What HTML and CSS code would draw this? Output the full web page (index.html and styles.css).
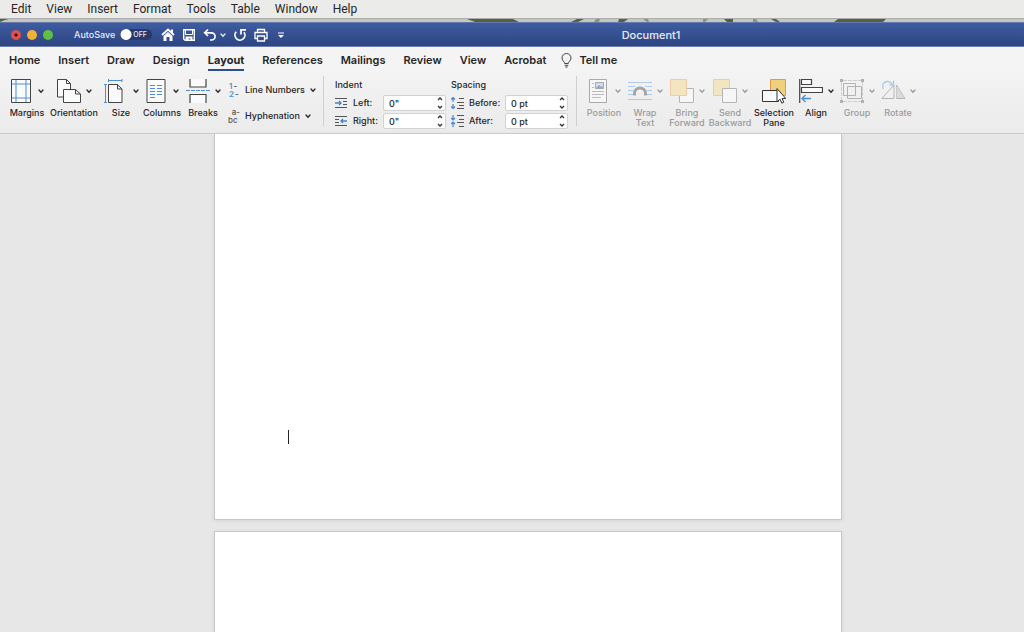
FILE: index.html
```html
<!DOCTYPE html>
<html lang="en">
<head>
<meta charset="utf-8">
<meta name="viewport" content="width=device-width, initial-scale=1">
<title>Document1</title>
<link rel="stylesheet" href="styles.css">
</head>
<body>
<svg class="defs" width="0" height="0" aria-hidden="true">
  <symbol id="chev" viewBox="0 0 6 6"><path d="M1 2l2 2.2L5 2" fill="none" stroke="currentColor" stroke-width="1.3" stroke-linecap="round"/></symbol>
  <symbol id="updown" viewBox="0 0 6 14"><path d="M1 4l2-2 2 2M1 10l2 2 2-2" fill="none" stroke="#333" stroke-width="1.3"/></symbol>
</svg>

<nav class="menubar" aria-label="Menu bar">
  <button>Edit</button><button>View</button><button>Insert</button><button>Format</button><button>Tools</button><button>Table</button><button>Window</button><button>Help</button>
</nav>
<svg class="wallpaper" height="4" viewBox="0 0 1024 3" preserveAspectRatio="none" aria-hidden="true">
  <path d="M0 0h9L5 1 0 3zM467 0h46l6 3h-44zM577 0h7l-6 3h-7zM619 0h9l-4 3h-6zM724 0h9v3h-6zM771 0h5l4 3h-4zM838 0h48l-3 3h-49z" fill="#536341"/>
  <path d="M596 0h4l-1 3h-5zM643 0h5l1 3h-2zM703 0h5l-3 3h-2zM753 0h3l2 3h-5z" fill="#7f9d6e"/>
</svg>

<header class="titlebar">
  <div class="lights">
    <button class="light close" aria-label="Close"></button>
    <button class="light minimize" aria-label="Minimize"></button>
    <button class="light zoom" aria-label="Zoom"></button>
  </div>
  <label class="autosave">AutoSave
    <span class="switch"><input type="checkbox" role="switch"><span class="off">OFF</span></span>
  </label>
  <div class="quick">
    <button aria-label="Home"><svg width="14" height="14" viewBox="0 0 14 14"><path d="M1 7l6-5.5L13 7" fill="none" stroke="#fff" stroke-width="1.7"/><path d="M10 1.5h2v4l-2-2zM2.5 8L7 4l4.500 4v5H8.500V9h-3v4h-3z" fill="#fff"/></svg></button>
    <button aria-label="Save"><svg width="14" height="14" viewBox="0 0 14 14"><path d="M2 1.700h10.300v10.600H3.200L1.700 11V1.700z" fill="none" stroke="#fff" stroke-width="1.400"/><path d="M3.500 1.500h7v5h-7z" fill="none" stroke="#fff"/><path d="M3.500 8.500h7V13H8.500v-2.500H6.500V13h-3z" fill="#fff"/></svg></button>
    <button class="undo" aria-label="Undo"><svg width="14" height="14" viewBox="0 0 14 14"><path d="M5 1.500L1.700 4.800 5 8M2 4.800h6.500a3.600 3.600 0 0 1 0 7.200H7" fill="none" stroke="#fff" stroke-width="1.700"/></svg></button>
    <button class="undo-more" aria-label="Undo history"><svg width="6" height="6"><use href="#chev"/></svg></button>
    <button aria-label="Repeat"><svg width="14" height="14" viewBox="0 0 14 14"><path d="M3.200 3.800A5 5 0 1 0 11 4.200M8 6.500V1.800h5" fill="none" stroke="#fff" stroke-width="1.700"/></svg></button>
    <button aria-label="Print"><svg width="14" height="14" viewBox="0 0 14 14"><path d="M3.500 4.500v-3h7v3M3.500 10.500H1v-6h12v6h-2.500M3.500 8h7v5h-7z" fill="none" stroke="#fff" stroke-width="1.300"/></svg></button>
    <button class="customize" aria-label="Customize toolbar"><svg width="6" height="8" viewBox="0 0 6 8"><path d="M0 2h6" stroke="#fff"/><path d="M0 4h6L3 7z" fill="#fff"/></svg></button>
  </div>
  <h1 class="title">Document1</h1>
</header>

<nav class="tabs" aria-label="Ribbon tabs">
  <button>Home</button><button>Insert</button><button>Draw</button><button>Design</button><button class="current" aria-current="page">Layout</button><button>References</button><button>Mailings</button><button>Review</button><button>View</button><button>Acrobat</button>
  <button class="tell"><svg width="11" height="15" viewBox="0 0 11 15" fill="none" stroke="#444"><path d="M3.700 10.500C3.700 8.500 1 8 1 5a4.500 4.500 0 0 1 9 0c0 3-2.700 3.500-2.700 5.500zM3.700 12.300h3.600M4.300 14h2.400"/></svg>Tell me</button>
</nav>

<section class="ribbon" aria-label="Layout">
  <div class="group setup">
    <button class="tool"><span class="art"><svg width="20" height="24" viewBox="0 0 20 24" fill="none"><path d="M.5.500h19v23H.5z" fill="#fafafa" stroke="#444"/><path d="M5 1v22M15 1v22M1 5h18M1 19h18" stroke="#4d8fd6"/></svg><svg class="chev" width="6" height="6"><use href="#chev"/></svg></span>Margins</button>
    <button class="tool wide"><span class="art"><svg width="24" height="24" viewBox="0 0 24 24" fill="#fafafa" stroke="#444"><path d="M.5.500h9l4 4v13.500h-13zM9.500.500v4h4"/><path d="M6.500 10.500h12l5 4.500v8.500h-17zM18.500 10.500V15h5"/></svg><svg class="chev near" width="6" height="6"><use href="#chev"/></svg></span>Orientation</button>
    <button class="tool"><span class="art"><svg width="22" height="24" viewBox="0 0 22 24" fill="none"><path d="M4.500 5.500h9l4.500 4.500v13.500H4.500zM13.500 5.500V10H18" fill="#fafafa" stroke="#444"/><path d="M4.500 1.500H18M4.500 0v3M18 0v3M1.500 5v18.500M0 5.500h3M0 23.500h3" stroke="#4d8fd6"/></svg><svg class="chev" width="6" height="6"><use href="#chev"/></svg></span>Size</button>
    <button class="tool mid"><span class="art"><svg width="20" height="24" viewBox="0 0 20 24" fill="none"><path d="M1 .500h18v23H1z" fill="#fafafa" stroke="#444"/><path d="M4 6.500h5M11 6.500h5M4 9.500h5M11 9.500h5M4 12.500h5M11 12.500h5M4 15.500h5M11 15.500h5M4 18.500h5" stroke="#4d8fd6"/></svg><svg class="chev" width="6" height="6"><use href="#chev"/></svg></span>Columns</button>
    <button class="tool"><span class="art"><svg width="24" height="24" viewBox="0 0 24 24" fill="none"><path d="M4 0v8h16V0M4 24v-8.500h16V24" fill="#fafafa" stroke="#444" stroke-width="1.200"/><path d="M0 11.500h24" stroke="#4d8fd6" stroke-dasharray="4 1"/></svg><svg class="chev near" width="6" height="6"><use href="#chev"/></svg></span>Breaks</button>
    <div class="stack">
      <button><span class="mark num"><span>1<i>-</i></span><span>2<i>-</i></span></span>Line Numbers<svg class="chev" width="6" height="6"><use href="#chev"/></svg></button>
      <button><span class="mark abc"><span>a-</span><span>bc</span></span>Hyphenation<svg class="chev" width="6" height="6"><use href="#chev"/></svg></button>
    </div>
  </div>

  <div class="group fields">
    <fieldset>
      <legend>Indent</legend>
      <div class="row"><svg width="13" height="12" viewBox="0 0 13 12" fill="none"><path d="M0 1.500h12M8 4.500h4M8 7.500h4M0 10.500h12" stroke="#555"/><path d="M0 6h6M4 4l2 2-2 2" stroke="#3f86d6" stroke-width="1.300"/></svg><label for="left">Left:</label><span class="spin"><input id="left" type="text" value='0"'><button aria-label="Change left indent"><svg width="6" height="14"><use href="#updown"/></svg></button></span></div>
      <div class="row"><svg width="13" height="12" viewBox="0 0 13 12" fill="none"><path d="M0 1.500h12M0 4.500h4M0 7.500h4M0 10.500h12" stroke="#555"/><path d="M12 6H6M8 4L6 6l2 2" stroke="#3f86d6" stroke-width="1.300"/></svg><label for="right">Right:</label><span class="spin"><input id="right" type="text" value='0"'><button aria-label="Change right indent"><svg width="6" height="14"><use href="#updown"/></svg></button></span></div>
    </fieldset>
    <fieldset class="spacing">
      <legend>Spacing</legend>
      <div class="row"><svg width="13" height="12" viewBox="0 0 13 12" fill="none"><path d="M8 1.500h5M6 5.500h7M8 8.500h5M6 11.500h7" stroke="#555"/><path d="M2 5V0M0 2.500L2 .500l2 2M2 7v5M0 9.500l2 2 2-2" stroke="#3f86d6" stroke-width="1.200"/></svg><label for="before">Before:</label><span class="spin"><input id="before" type="text" value="0 pt"><button aria-label="Change space before"><svg width="6" height="14"><use href="#updown"/></svg></button></span></div>
      <div class="row"><svg width="13" height="12" viewBox="0 0 13 12" fill="none"><path d="M6 .500h7M8 4.500h5M6 7.500h7M8 11.500h5" stroke="#555"/><path d="M2 0v5M0 3l2 2 2-2M2 12V7M0 9l2-2 2 2" stroke="#3f86d6" stroke-width="1.200"/></svg><label for="after">After:</label><span class="spin"><input id="after" type="text" value="0 pt"><button aria-label="Change space after"><svg width="6" height="14"><use href="#updown"/></svg></button></span></div>
    </fieldset>
  </div>

  <div class="group arrange">
    <button class="tool" disabled><span class="art"><svg width="20" height="24" viewBox="0 0 20 24" fill="none"><path d="M1.500.500h17v23h-17z" fill="#f6f6f6" stroke="#aaa"/><path d="M7.500 3.500h8v6h-8z" fill="#cfdcec" stroke="#a9a9a9"/><path d="M8 9l3-3 2 2 1-1 1 2z" fill="#8aa9cc"/><path d="M4 4.500h2M4 8.500h2M4 12.500h12M4 15.500h12M4 18.500h9" stroke="#bbb"/></svg><svg class="chev" width="6" height="6"><use href="#chev"/></svg></span>Position</button>
    <button class="tool mid" disabled><span class="art"><svg width="24" height="24" viewBox="0 0 24 24" fill="none"><path d="M0 3.500h24M0 7.500h7M17 7.500h7M0 11.500h5M19 11.500h5M0 15.500h5M19 15.500h5M0 20.500h24" stroke="#b0cbea"/><path d="M6.500 16.500v-2a5.500 5.500 0 0 1 11 0v2" stroke="#a5a5a5" stroke-width="3"/></svg><svg class="chev near" width="6" height="6"><use href="#chev"/></svg></span>Wrap<br>Text</button>
    <button class="tool mid" disabled><span class="art"><svg width="24" height="24" viewBox="0 0 24 24"><path d="M9.500 9.500h14v14h-14z" fill="#f6f6f6" stroke="#b5b5b5"/><path d="M.5.500h16v16H.5z" fill="#f2e5c2" stroke="#efcba8"/></svg><svg class="chev near" width="6" height="6"><use href="#chev"/></svg></span>Bring<br>Forward</button>
    <button class="tool big" disabled><span class="art"><svg width="24" height="24" viewBox="0 0 24 24"><path d="M.5.500h16v16H.5z" fill="#f2e5c2" stroke="#efcba8"/><path d="M9.500 9.500h14v14h-14z" fill="#f6f6f6" stroke="#b5b5b5"/></svg><svg class="chev near" width="6" height="6"><use href="#chev"/></svg></span>Send<br>Backward</button>
    <button class="tool big"><span class="art"><svg width="24" height="26" viewBox="0 0 24 26"><path d="M8.500 1.500h15v16h-15z" fill="#f0d07c" stroke="#e39a48"/><path d="M.5 12.500h16v11H.5z" fill="#fafafa" stroke="#333"/><path d="M15 10.500v13.300l3-2.600 1.800 4 2-1-1.800-3.700h3.800z" fill="#fff" stroke="#333"/></svg></span>Selection<br>Pane</button>
    <button class="tool"><span class="art"><svg width="24" height="24" viewBox="0 0 24 24" fill="none"><path d="M.700 0v24M2.500.500h10v5h-10zM2.500 8.500h21v5h-21z" fill="#fafafa" stroke="#444" stroke-width="1.200"/><path d="M12 19.500H3M6.500 16L3 19.500 6.500 23" stroke="#4d8fd6" stroke-width="1.400"/></svg><svg class="chev near" width="6" height="6"><use href="#chev"/></svg></span>Align</button>
    <button class="tool mid" disabled><span class="art"><svg width="24" height="24" viewBox="0 0 24 24" fill="none"><path d="M3 1.500h18M3 22.500h18M1.500 3v18M22.500 3v18" stroke="#cdcdcd" stroke-dasharray="4 1"/><path d="M3.500 4.500h12v12h-12zM7.500 7.500h14v12h-14z" stroke="#b2b2b2"/><path d="M0 0h3v3H0zM21 0h3v3h-3zM0 21h3v3H0zM21 21h3v3h-3z" fill="#b0b0b0"/></svg><svg class="chev near" width="6" height="6"><use href="#chev"/></svg></span>Group</button>
    <button class="tool" disabled><span class="art"><svg width="24" height="24" viewBox="0 0 24 24" fill="none"><path d="M.800 19.500L13 6v13.500zM15.500 6L24 19.500h-8.500z" stroke="#b5b5b5"/><path d="M15.500 7L23 19h-7.500z" fill="#dadada"/><path d="M2.500 10C0 5 4 2 7 2.500c2 .500 3 1.500 4.500 2.500M8.500 6h4V1.500" stroke="#b0cbea" stroke-width="1.400"/></svg><svg class="chev near" width="6" height="6"><use href="#chev"/></svg></span>Rotate</button>
  </div>
</section>

<main class="canvas">
  <article class="page first"><span class="caret"></span></article>
  <article class="page next"></article>
</main>
</body>
</html>
```

FILE: styles.css
```css
* { box-sizing: border-box; }

body {
  margin: 0;
  height: 100vh;
  display: flex;
  flex-direction: column;
  overflow: hidden;
  background: #e7e7e7;
  color: #262626;
  font-family: Inter, "Liberation Sans", sans-serif;
}

button {
  padding: 0;
  border: 0;
  background: none;
  color: inherit;
  font: inherit;
  white-space: nowrap;
}

svg { flex: none; display: block; }
.defs { position: absolute; }

.menubar {
  display: flex;
  gap: 15px;
  padding: 0 11px;
  height: 18px;
  background: #ebebea;
  font-family: Roboto, Inter, sans-serif;
  font-size: 12px;
  line-height: 18px;
}

.wallpaper {
  width: 100%;
  background: #c5c6c1;
  border-top: 1px solid #adadab;
}

.titlebar {
  display: flex;
  align-items: center;
  height: 25px;
  padding: 0 12px 0 11px;
  background: linear-gradient(#405c9f, #2c4583);
  border-top: 1px solid #6179ad;
  border-bottom: 1px solid #6f7fa9;
  color: #e8ecf5;
}

.lights { display: flex; gap: 6px; width: 63px; }
.light { width: 10px; height: 10px; border-radius: 50%; }
.close { background: radial-gradient(circle, #3a0b08 0 1px, #e0504a 2px); }
.minimize { background: #f0b137; }
.zoom { background: #5fc043; }

.autosave {
  display: flex;
  align-items: center;
  gap: 5px;
  width: 87px;
  font-size: 9px;
  font-weight: 500;
}

.switch { position: relative; display: flex; }
.switch input {
  appearance: none;
  width: 32px;
  height: 11px;
  margin: 0;
  border-radius: 6px;
  background: radial-gradient(circle at 6px 50%, #fff 5px, transparent 6px), #253a6c;
}
.off {
  position: absolute;
  left: 13px;
  top: 0;
  font-size: 7px;
  line-height: 11px;
}

.quick { display: flex; align-items: center; gap: 7px; width: 129px; }
.undo { margin-right: -4px; }
.customize { margin-left: 3px; }

.title {
  flex: 1;
  margin: 0;
  font-size: 11px;
  font-weight: 500;
  text-align: center;
}

.tabs {
  display: flex;
  gap: 18px;
  height: 25px;
  padding: 0 9px;
  background: #f4f4f4;
  font-size: 11px;
  font-weight: 600;
}
.tabs button { height: 24px; padding-top: 4px; border-bottom: 2px solid transparent; }
.tabs .current { border-bottom-color: #2f4c8f; font-weight: 700; }
.tabs .tell { display: flex; align-items: center; gap: 7px; margin-left: -3px; }

.ribbon {
  display: flex;
  height: 62px;
  padding-left: 7px;
  background: linear-gradient(#f3f3f3, #ebebeb);
  border-bottom: 1px solid #c9c9c9;
  font-size: 9px;
  font-weight: 500;
  line-height: 10px;
}

.group { display: flex; align-items: flex-start; padding-top: 7px; }
.fields, .arrange { position: relative; }
.fields::before, .arrange::before {
  content: "";
  position: absolute;
  left: 0;
  top: 4px;
  bottom: 7px;
  border-left: 1px solid #cfcfcf;
}
.setup { width: 316px; }
.fields { width: 253px; padding: 7px 0 0 12px; gap: 5px; }
.arrange { padding-left: 8px; }

.tool { width: 40px; display: flex; flex-direction: column; align-items: center; }
.tool.mid { width: 42px; }
.tool.big { width: 44px; }
.tool.wide { width: 54px; }
.tool:disabled { color: #9b9b9b; }
.art { display: flex; align-items: center; gap: 7px; height: 24px; margin-bottom: 5px; }
.near { margin-left: -2px; }

.stack { display: flex; flex-direction: column; gap: 10px; padding: 3px 0 0 5px; }
.stack button { display: flex; align-items: center; gap: 5px; }
.mark { display: flex; flex-direction: column; width: 12px; line-height: 8px; }
.num { color: #4d8fd6; font-size: 8px; font-weight: 600; text-align: left; padding-left: 1px; }
.num i { color: #555; font-style: normal; padding-left: 1px; }
.abc { color: #555; font-size: 8px; font-weight: 500; text-align: right; }
.abc span + span { text-align: left; }

fieldset { width: 111px; margin: 0; padding: 0; border: 0; }
fieldset.spacing { width: 117px; }
legend { padding: 0; height: 16px; line-height: 12px; }
.row { display: flex; align-items: center; margin-bottom: 2px; }
.row label { flex: 1; padding-left: 5px; }
.spin { position: relative; }
.spin input {
  display: block;
  width: 63px;
  height: 16px;
  padding: 0 16px 0 5px;
  border: 1px solid #d2d2d2;
  border-radius: 2px;
  background: #fff;
  color: #262626;
  font: inherit;
}
.spin button { position: absolute; right: 3px; top: 1px; }

.canvas {
  flex: 1;
  min-height: 0;
  display: flex;
  flex-direction: column;
  align-items: center;
  gap: 11px;
  padding-left: 32px;
}
.page {
  width: 100%;
  max-width: 628px;
  background: #fff;
  border: 1px solid #c8c8c8;
  box-shadow: 0 1px 4px #d4d4d4;
}
.first { flex: none; min-height: 386px; padding: 296px 73px 0; border-top: 0; }
.next { flex: 1; border-bottom: 0; }
.caret { display: block; width: 1px; height: 14px; background: #222; }
```
